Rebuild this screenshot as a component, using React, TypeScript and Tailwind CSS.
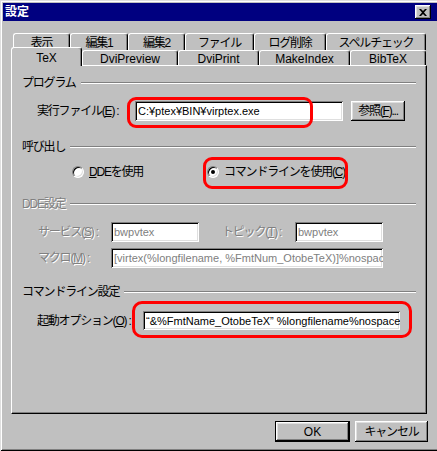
import type { ReactNode } from "react";

const raised = "shadow-[inset_-1px_-1px_#000,inset_1px_1px_#fff,inset_-2px_-2px_#808080,inset_2px_2px_#dfdfdf]";
const sunken = "shadow-[inset_1px_1px_#808080,inset_-1px_-1px_#fff,inset_2px_2px_#000,inset_-2px_-2px_#dfdfdf]";
const dim = "text-[#808080] [text-shadow:1px_1px_0_#fff]";
const jp = "tracking-[-1.2px]";

function Header({ label, disabled }: { label: string; disabled?: boolean }) {
    return (
        <div className="flex h-[16px] items-center gap-[5px]">
            <span className={`${jp} ${disabled ? dim : ""}`}>{label}</span>
            <div className="h-[2px] flex-1 border-b border-t border-b-white border-t-[#808080]" />
        </div>
    );
}

function Field({ value, w, h = 20, disabled }: { value: string; w: number; h?: number; disabled?: boolean }) {
    return (
        <div
            className={`flex shrink-0 items-center overflow-hidden bg-white pl-[3px] text-[11px] ${sunken} ${disabled ? "text-[#808080]" : ""}`}
            style={{ width: w, height: h }}
        >
            {value}
        </div>
    );
}

function Radio({ checked, children }: { checked?: boolean; children: ReactNode }) {
    return (
        <div className="flex items-center gap-[5px]">
            <div className="flex h-[12px] w-[12px] items-center justify-center rounded-full border border-b-white border-l-[#808080] border-r-white border-t-[#808080] bg-white shadow-[inset_1px_1px_#000,inset_-1px_-1px_#dfdfdf]">
                {checked && <div className="h-[4px] w-[4px] rounded-full bg-black" />}
            </div>
            <span className={jp}>{children}</span>
        </div>
    );
}

const backTabs = [
    { title: "表示", w: 57 },
    { title: "編集1", w: 58 },
    { title: "編集2", w: 57 },
    { title: "ファイル", w: 69 },
    { title: "ログ削除", w: 72 },
    { title: "スペルチェック", w: 100 },
];

const frontTabs = [
    { title: "DviPreview", w: 96 },
    { title: "DviPrint", w: 81 },
    { title: "MakeIndex", w: 91 },
    { title: "BibTeX", w: 76 },
];

const tabEdge = "rounded-t-[3px] border-l border-t border-r border-l-white border-t-white border-r-black shadow-[inset_-1px_0_#808080]";

export default function App() {
    return (
        <div className="relative h-[451px] w-[437px] overflow-hidden whitespace-nowrap bg-[#c0c0c0] font-['Liberation_Sans','Noto_Sans_CJK_JP',sans-serif] text-[12px] leading-[16px] text-black">
            <div className="flex h-[451px] w-[440px] flex-col p-[3px] shadow-[inset_1px_1px_#dfdfdf,inset_-1px_-1px_#000,inset_2px_2px_#fff,inset_-2px_-2px_#808080]">
                {/* title bar */}
                <div className="flex h-[18px] items-center justify-between bg-[#000080] pl-[2px] pr-[6px]">
                    <span className="font-bold text-white">設定</span>
                    <div className={`flex h-[14px] w-[16px] items-center justify-center bg-[#c0c0c0] ${raised}`}>
                        <svg width="8" height="7" viewBox="0 0 8 7">
                            <path d="M0 0h2l2 2 2-2h2L5 3.5 8 7H6L4 5 2 7H0l3-3.5z" fill="#000" />
                        </svg>
                    </div>
                </div>

                {/* tabs */}
                <div className="ml-[10px] mt-[12px] flex h-[17px]">
                    {backTabs.map((t) => (
                        <div key={t.title} className={`flex shrink-0 justify-center pt-[1px] ${jp} ${tabEdge}`} style={{ width: t.w }}>
                            {t.title}
                        </div>
                    ))}
                </div>
                <div className="-mt-[3px] ml-[8px] flex h-[18px] items-end">
                    <div className={`relative z-10 -mb-px flex h-[19px] w-[71px] shrink-0 justify-center bg-[#c0c0c0] pt-[2px] ${tabEdge}`}>TeX</div>
                    {frontTabs.map((t) => (
                        <div key={t.title} className={`flex h-[15px] shrink-0 justify-center ${tabEdge}`} style={{ width: t.w }}>
                            {t.title}
                        </div>
                    ))}
                </div>

                {/* panel */}
                <div className="ml-[8px] flex h-[349px] w-[416px] flex-col border-b border-l border-r border-t border-b-black border-l-white border-r-black border-t-white px-[10px] pt-[9px] shadow-[inset_-1px_-1px_#808080]">
                    <Header label="プログラム" />
                    <div className="mt-[10px] flex items-center pl-[15px]">
                        <span className={`w-[98px] shrink-0 ${jp}`}>
                            実行ファイル(<u>E</u>) :
                        </span>
                        <Field value="C:¥ptex¥BIN¥virptex.exe" w={208} />
                        <div className={`ml-[8px] flex h-[20px] w-[54px] items-center justify-center ${jp} ${raised}`}>
                            参照(<u>F</u>)...
                        </div>
                    </div>

                    <div className="mt-[18px]">
                        <Header label="呼び出し" />
                    </div>
                    <div className="mt-[9px] flex pl-[50px]">
                        <div className="w-[135px]">
                            <Radio>
                                <u>D</u>DEを使用
                            </Radio>
                        </div>
                        <Radio checked>
                            コマンドラインを使用(<u>C</u>)
                        </Radio>
                    </div>

                    <div className="mt-[16px]">
                        <Header label="DDE設定" disabled />
                    </div>
                    <div className="mt-[10px] flex items-center pl-[16px]">
                        <span className={`w-[73px] shrink-0 ${jp} ${dim}`}>
                            サービス(<u>S</u>) :
                        </span>
                        <Field value="bwpvtex" w={88} disabled />
                        <span className={`ml-[23px] w-[73px] shrink-0 ${jp} ${dim}`}>
                            トピック(<u>T</u>) :
                        </span>
                        <Field value="bwpvtex" w={88} disabled />
                    </div>
                    <div className="mt-[6px] flex items-center pl-[16px]">
                        <span className={`w-[73px] shrink-0 ${jp} ${dim}`}>
                            マクロ(<u>M</u>) :
                        </span>
                        <Field value="[virtex(%longfilename, %FmtNum_OtobeTeX)]%nospace" w={272} disabled />
                    </div>

                    <div className="mt-[16px]">
                        <Header label="コマンドライン設定" />
                    </div>
                    <div className="mt-[11px] flex items-center pl-[15px]">
                        <span className={`w-[106px] shrink-0 ${jp}`}>
                            起動オプション(<u>O</u>) :
                        </span>
                        <Field value="“&%FmtName_OtobeTeX” %longfilename%nospace" w={257} h={19} />
                    </div>
                </div>

                {/* buttons */}
                <div className="mt-[7px] flex justify-end gap-[5px] pr-[9px]">
                    <div className="flex h-[21px] w-[75px] items-center justify-center border border-black">
                        <div className={`flex h-full w-full items-center justify-center ${raised}`}>OK</div>
                    </div>
                    <div className={`flex h-[21px] w-[73px] items-center justify-center ${jp} ${raised}`}>キャンセル</div>
                </div>
            </div>

            {/* red annotation marks */}
            <div className="absolute left-[127px] top-[97px] h-[31px] w-[186px] rounded-[9px] border-[3px] border-[#ff0000]" />
            <div className="absolute left-[203px] top-[157px] h-[32px] w-[145px] rounded-[9px] border-[3px] border-[#ff0000]" />
            <div className="absolute left-[132px] top-[301px] h-[37px] w-[280px] rounded-[10px] border-[3px] border-[#ff0000]" />
        </div>
    );
}
